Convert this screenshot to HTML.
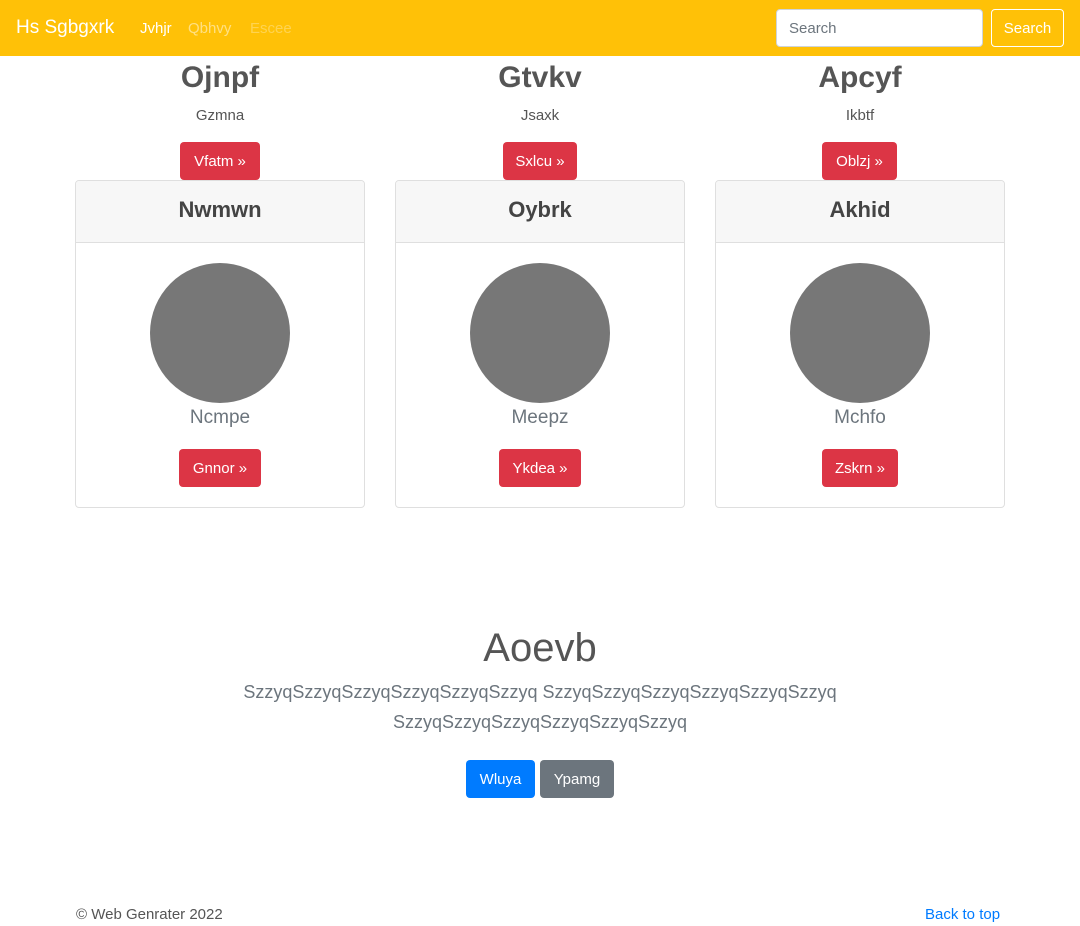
<!DOCTYPE html>
<html><head><meta charset="utf-8"><style>
*{box-sizing:border-box;margin:0;padding:0}
body{width:1080px;height:926px;position:relative;font-family:"Liberation Sans",sans-serif;background:#fff;color:#212529;overflow:hidden}
.a{position:absolute}
.nav{left:0;top:0;width:1080px;height:56px;background:#ffc107}
.c{text-align:center;transform:translateX(-50%);white-space:nowrap}
.btn{position:absolute;border-radius:4px;color:#fff;font-size:15px;display:flex;align-items:center;justify-content:center}
.red{background:#dc3545}
.card{position:absolute;top:180px;width:290px;height:328px;border:1px solid #dfdfdf;border-radius:4px;overflow:hidden}
.card .h{height:62px;background:#f7f7f7;border-bottom:1px solid #dfdfdf;text-align:center;font-weight:bold;font-size:22px;line-height:58px;color:#444}
.circ{position:absolute;left:74px;top:82px;width:140px;height:140px;border-radius:50%;background:#777}
.nm{position:absolute;left:0;width:100%;top:226px;text-align:center;font-size:19px;color:#6c757d;font-weight:300}
</style></head><body>
<div class="a nav"></div>
<div class="a" style="left:16px;top:17px;color:#fff;font-size:19px">Hs Sgbgxrk</div>
<div class="a" style="left:140px;top:20px;color:#fff;font-size:15px">Jvhjr</div>
<div class="a" style="left:188px;top:20px;color:rgba(255,255,255,.5);font-size:15px">Qbhvy</div>
<div class="a" style="left:250px;top:20px;color:rgba(255,255,255,.3);font-size:15px">Escee</div>
<div class="a" style="left:776px;top:9px;width:207px;height:38px;background:#fff;border:1px solid #ced4da;border-radius:4px;padding:10px 12px;font-size:15px;color:#6c757d">Search</div>
<div class="btn" style="left:991px;top:9px;width:73px;height:38px;border:1px solid #fff;">Search</div>

<div class="a c" style="left:220px;top:61px;font-size:30px;font-weight:bold;color:#555">Ojnpf</div>
<div class="a c" style="left:540px;top:61px;font-size:30px;font-weight:bold;color:#555">Gtvkv</div>
<div class="a c" style="left:860px;top:61px;font-size:30px;font-weight:bold;color:#555">Apcyf</div>
<div class="a c" style="left:220px;top:107px;font-size:15px;color:#555">Gzmna</div>
<div class="a c" style="left:540px;top:107px;font-size:15px;color:#555">Jsaxk</div>
<div class="a c" style="left:860px;top:107px;font-size:15px;color:#555">Ikbtf</div>
<div class="btn red" style="left:180px;top:142px;width:80px;height:38px">Vfatm »</div>
<div class="btn red" style="left:503px;top:142px;width:74px;height:38px">Sxlcu »</div>
<div class="btn red" style="left:822px;top:142px;width:75px;height:38px">Oblzj »</div>

<div class="card" style="left:75px"><div class="h">Nwmwn</div><div class="circ"></div><div class="nm">Ncmpe</div></div>
<div class="card" style="left:395px"><div class="h">Oybrk</div><div class="circ"></div><div class="nm">Meepz</div></div>
<div class="card" style="left:715px"><div class="h">Akhid</div><div class="circ"></div><div class="nm">Mchfo</div></div>
<div class="btn red" style="left:179px;top:449px;width:82px;height:38px">Gnnor »</div>
<div class="btn red" style="left:499px;top:449px;width:82px;height:38px">Ykdea »</div>
<div class="btn red" style="left:822px;top:449px;width:76px;height:38px">Zskrn »</div>

<div class="a c" style="left:540px;top:626px;font-size:40px;font-weight:300;color:#555">Aoevb</div>
<div class="a c" style="left:540px;top:677px;font-size:18px;font-weight:300;color:#6c757d;line-height:30px">SzzyqSzzyqSzzyqSzzyqSzzyqSzzyq SzzyqSzzyqSzzyqSzzyqSzzyqSzzyq<br>SzzyqSzzyqSzzyqSzzyqSzzyqSzzyq</div>
<div class="btn" style="left:466px;top:760px;width:69px;height:38px;background:#007bff">Wluya</div>
<div class="btn" style="left:540px;top:760px;width:74px;height:38px;background:#6c757d">Ypamg</div>

<div class="a" style="left:76px;top:906px;font-size:15px;color:#555">© Web Genrater 2022</div>
<div class="a" style="left:925px;top:906px;font-size:15px;color:#007bff">Back to top</div>
</body></html>
